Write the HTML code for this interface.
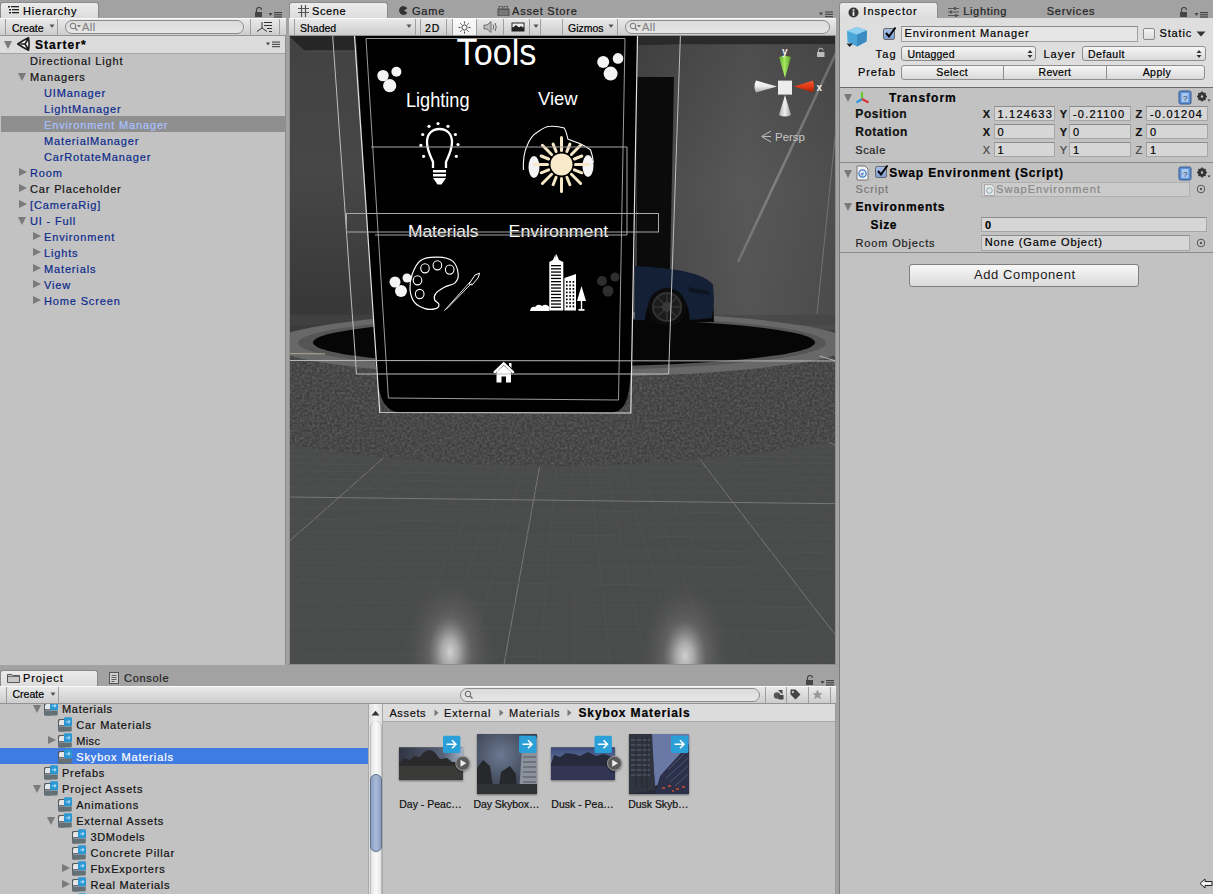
<!DOCTYPE html>
<html><head><meta charset="utf-8">
<style>
*{margin:0;padding:0;box-sizing:border-box}
html,body{width:1213px;height:894px;overflow:hidden;background:#a2a2a2;font-family:"Liberation Sans",sans-serif;font-size:11px;color:#000}
.a{position:absolute}
.t{position:absolute;white-space:nowrap;letter-spacing:0.75px;line-height:16px;-webkit-text-stroke:0.2px currentColor}
.tab{position:absolute;top:2px;height:16px;border:1px solid #8a8a8a;border-bottom:none;border-radius:3px 3px 0 0;background:linear-gradient(#ececec,#dcdcdc)}
.tbar{position:absolute;height:18px;background:linear-gradient(#e9e9e9,#cdcdcd);border-top:1px solid #fafafa;border-bottom:1px solid #939393}
.panel{position:absolute;background:#c2c2c2}
.row{position:absolute;height:16px;left:0;right:0}
.tri-d{position:absolute;width:0;height:0;border-left:4.5px solid transparent;border-right:4.5px solid transparent;border-top:8px solid #7a7a7a}
.tri-r{position:absolute;width:0;height:0;border-top:4.5px solid transparent;border-bottom:4.5px solid transparent;border-left:8px solid #7a7a7a}
.blue{color:#1a318c}
.search{position:absolute;height:14px;border:1px solid #8c8c8c;border-radius:7px;background:linear-gradient(#dcdcdc,#e6e6e6)}
.sep{position:absolute;width:1px;background:#9f9f9f}
</style></head><body>

<!-- ============ HIERARCHY ============ -->
<div class="tab" style="left:0;width:99px"></div>
<svg class="a" style="left:8px;top:6px" width="12" height="8" viewBox="0 0 12 8"><rect x="0" y="0" width="2" height="1.5" fill="#222"/><rect x="3" y="0" width="8" height="1.3" fill="#222"/><rect x="1" y="3" width="2" height="1.5" fill="#222"/><rect x="4" y="3" width="7" height="1.3" fill="#222"/><rect x="1" y="6" width="2" height="1.5" fill="#222"/><rect x="4" y="6" width="7" height="1.3" fill="#222"/></svg>
<div class="t" style="left:23px;top:3px;font-size:11px;letter-spacing:0.8px">Hierarchy</div>
<svg class="a" style="left:254px;top:7px" width="30" height="11" viewBox="0 0 30 11"><path d="M2.5 5 V3 a2.5 2.5 0 0 1 5 0" stroke="#444" stroke-width="1.2" fill="none"/><rect x="1" y="5" width="7" height="5" fill="#444"/><path d="M14.5 6 h4 l-2 3z" fill="#444"/><rect x="20" y="5" width="8" height="1.2" fill="#444"/><rect x="20" y="7.2" width="8" height="1.2" fill="#444"/><rect x="20" y="9.4" width="8" height="1.2" fill="#444"/></svg>
<div class="tbar" style="left:0;top:18px;width:286px"></div>
<div class="sep" style="left:5px;top:19px;height:16px"></div>
<div class="t" style="left:12px;top:19.5px;font-size:10.5px;letter-spacing:0px">Create</div>
<svg class="a" style="left:49px;top:24px" width="6" height="5"><path d="M0.5 0.5h5l-2.5 3.5z" fill="#555"/></svg>
<div class="sep" style="left:57px;top:19px;height:16px"></div>
<div class="search" style="left:65px;top:20px;width:179px"></div>
<svg class="a" style="left:69px;top:22px" width="14" height="10" viewBox="0 0 14 10"><circle cx="4" cy="4" r="2.8" stroke="#777" stroke-width="1" fill="none"/><path d="M6 6 L8.5 8.5" stroke="#777" stroke-width="1.2"/><path d="M8 3h4l-2 2.5z" fill="#777"/></svg>
<div class="t" style="left:82px;top:19px;font-size:11px;color:#888;letter-spacing:0.5px">All</div>
<div class="sep" style="left:250px;top:19px;height:16px"></div>
<svg class="a" style="left:256px;top:21px" width="18" height="12" viewBox="0 0 18 12"><path d="M6 1v6 M6 7 L1 10.5 M6 7 L11 10.5" stroke="#333" stroke-width="1" fill="none"/><rect x="8" y="1" width="8" height="1" fill="#333"/><rect x="8" y="4" width="8" height="1" fill="#333"/><rect x="11" y="7" width="5" height="1" fill="#333"/><rect x="13" y="10" width="3" height="1" fill="#333"/></svg>
<div class="sep" style="left:279px;top:19px;height:16px"></div>
<div class="panel" style="left:0;top:36px;width:286px;height:629px;border-right:1px solid #8c8c8c"></div>
<div class="a" style="left:0;top:36px;width:285px;height:18px;background:#dcdcdc;border-bottom:1px solid #a5a5a5"></div>
<div class="tri-d" style="left:4px;top:41px"></div>
<svg class="a" style="left:17px;top:37px" width="14" height="14" viewBox="0 0 14 14"><path d="M0.8 7 Q6 3.5 11.5 0.8 Q12.6 7 11.5 13.2 Q6 10.5 0.8 7Z" fill="#fff" stroke="#1a1a1a" stroke-width="1.6" stroke-linejoin="round"/><path d="M3.5 7 H8 L11.2 1.8 M8 7 L11.2 12.2" stroke="#1a1a1a" stroke-width="1.7" fill="none"/></svg>
<div class="t" style="left:35px;top:37px;font-size:12px;font-weight:bold;letter-spacing:1.05px">Starter*</div>
<svg class="a" style="left:266px;top:41px" width="16" height="7" viewBox="0 0 16 7"><path d="M0 1.5h4l-2 3z" fill="#444"/><rect x="6" y="0.5" width="8" height="1.1" fill="#444"/><rect x="6" y="2.8" width="8" height="1.1" fill="#444"/><rect x="6" y="5.1" width="8" height="1.1" fill="#444"/></svg>
<div class="t" style="left:30px;top:53px;color:#111;letter-spacing:0.85px">Directional Light</div>
<div class="tri-d" style="left:18px;top:73px"></div>
<div class="t" style="left:30px;top:69px;color:#111;letter-spacing:0.85px">Managers</div>
<div class="t" style="left:44px;top:85px;color:#0c2a8c;letter-spacing:0.85px">UIManager</div>
<div class="t" style="left:44px;top:101px;color:#0c2a8c;letter-spacing:0.85px">LightManager</div>
<div class="a" style="left:1px;top:116px;width:284px;height:16px;background:#8f8f8f"></div>
<div class="t" style="left:44px;top:117px;color:#a9c0ff;letter-spacing:0.85px">Environment Manager</div>
<div class="t" style="left:44px;top:133px;color:#0c2a8c;letter-spacing:0.85px">MaterialManager</div>
<div class="t" style="left:44px;top:149px;color:#0c2a8c;letter-spacing:0.85px">CarRotateManager</div>
<div class="tri-r" style="left:19px;top:168px"></div>
<div class="t" style="left:30px;top:165px;color:#0c2a8c;letter-spacing:0.85px">Room</div>
<div class="tri-r" style="left:19px;top:184px"></div>
<div class="t" style="left:30px;top:181px;color:#111;letter-spacing:0.85px">Car Placeholder</div>
<div class="tri-r" style="left:19px;top:200px"></div>
<div class="t" style="left:30px;top:197px;color:#0c2a8c;letter-spacing:0.85px">[CameraRig]</div>
<div class="tri-d" style="left:18px;top:217px"></div>
<div class="t" style="left:30px;top:213px;color:#0c2a8c;letter-spacing:0.85px">UI - Full</div>
<div class="tri-r" style="left:33px;top:232px"></div>
<div class="t" style="left:44px;top:229px;color:#0c2a8c;letter-spacing:0.85px">Environment</div>
<div class="tri-r" style="left:33px;top:248px"></div>
<div class="t" style="left:44px;top:245px;color:#0c2a8c;letter-spacing:0.85px">Lights</div>
<div class="tri-r" style="left:33px;top:264px"></div>
<div class="t" style="left:44px;top:261px;color:#0c2a8c;letter-spacing:0.85px">Materials</div>
<div class="tri-r" style="left:33px;top:280px"></div>
<div class="t" style="left:44px;top:277px;color:#0c2a8c;letter-spacing:0.85px">View</div>
<div class="tri-r" style="left:33px;top:296px"></div>
<div class="t" style="left:44px;top:293px;color:#0c2a8c;letter-spacing:0.85px">Home Screen</div>

<!-- ============ SCENE ============ -->
<div class="tab" style="left:289px;width:99px"></div>
<svg class="a" style="left:298px;top:5px" width="12" height="12" viewBox="0 0 12 12"><path d="M3.5 0v12M7.5 0v12M0 3.5h11M0 7.5h11" stroke="#555" stroke-width="1.2"/></svg>
<div class="t" style="left:312px;top:3px;letter-spacing:0.6px">Scene</div>
<svg class="a" style="left:399px;top:6px" width="9" height="9" viewBox="0 0 9 9"><path d="M4.5 0.3 A4.2 4.2 0 1 0 8.7 4.5 L5.5 4.5 A1 1 0 0 1 5.5 3 Z" fill="#333"/><circle cx="4.5" cy="4.5" r="4.2" fill="#333"/><path d="M5 4.5 L9 2 L9 7Z" fill="#a2a2a2"/></svg>
<div class="t" style="left:412px;top:3px;letter-spacing:0.8px;color:#222">Game</div>
<svg class="a" style="left:497px;top:5px" width="13" height="11" viewBox="0 0 13 11"><rect x="1" y="4" width="11" height="7" fill="#777" stroke="#444" stroke-width="0.8"/><rect x="2" y="1.5" width="3.5" height="3" fill="none" stroke="#555" stroke-width="0.8"/><rect x="7" y="1.5" width="3.5" height="3" fill="none" stroke="#555" stroke-width="0.8"/></svg>
<div class="t" style="left:512px;top:3px;letter-spacing:0.8px;color:#222">Asset Store</div>
<svg class="a" style="left:819px;top:11px" width="16" height="7" viewBox="0 0 16 7"><path d="M0 1.5h4l-2 3z" fill="#444"/><rect x="6" y="0.5" width="8" height="1.1" fill="#444"/><rect x="6" y="2.8" width="8" height="1.1" fill="#444"/><rect x="6" y="5.1" width="8" height="1.1" fill="#444"/></svg>
<div class="tbar" style="left:289px;top:18px;width:547px"></div>
<div class="sep" style="left:294px;top:19px;height:16px"></div>
<div class="t" style="left:300px;top:19.5px;font-size:10.5px;letter-spacing:0px">Shaded</div>
<svg class="a" style="left:406px;top:24px" width="6" height="5"><path d="M0.5 0.5h5l-2.5 3.5z" fill="#555"/></svg>
<div class="sep" style="left:415px;top:19px;height:16px"></div>
<div class="sep" style="left:420px;top:19px;height:16px"></div>
<div class="t" style="left:425px;top:19.5px;font-size:10.5px;letter-spacing:1px">2D</div>
<div class="sep" style="left:446px;top:19px;height:16px"></div>
<div class="a" style="left:452px;top:19px;width:25px;height:16px;background:linear-gradient(#fafafa,#f0f0f0);border-left:1px solid #9f9f9f;border-right:1px solid #9f9f9f"></div>
<svg class="a" style="left:458px;top:21px" width="13" height="13" viewBox="0 0 13 13"><circle cx="6.5" cy="6.5" r="2.6" fill="none" stroke="#444" stroke-width="1"/><path d="M6.5 0.5v2M6.5 10.5v2M0.5 6.5h2M10.5 6.5h2M2.3 2.3l1.4 1.4M9.3 9.3l1.4 1.4M2.3 10.7l1.4-1.4M9.3 3.7l1.4-1.4" stroke="#444" stroke-width="1"/></svg>
<svg class="a" style="left:483px;top:20px" width="15" height="14" viewBox="0 0 15 14"><path d="M1 5h3l4-3.5v11L4 9H1z" fill="#bbb" stroke="#666" stroke-width="0.9"/><path d="M10 4.5q1.5 2.5 0 5M12 3q2.5 4 0 8" stroke="#666" stroke-width="1" fill="none"/></svg>
<div class="sep" style="left:503px;top:19px;height:16px"></div>
<svg class="a" style="left:511px;top:22px" width="14" height="10" viewBox="0 0 14 10"><rect x="0.5" y="0.5" width="13" height="9" fill="#222"/><rect x="1.5" y="1.5" width="11" height="4" fill="#eee"/><path d="M1.5 6 L5 3 L8 5.5 L10 4 L12.5 6z" fill="#222"/></svg>
<div class="sep" style="left:529px;top:19px;height:16px"></div>
<svg class="a" style="left:533px;top:24px" width="6" height="5"><path d="M0.5 0.5h5l-2.5 3.5z" fill="#555"/></svg>
<div class="sep" style="left:540px;top:19px;height:16px"></div>
<div class="sep" style="left:562px;top:19px;height:16px"></div>
<div class="t" style="left:568px;top:19.5px;font-size:10.5px;letter-spacing:0px">Gizmos</div>
<svg class="a" style="left:608px;top:24px" width="6" height="5"><path d="M0.5 0.5h5l-2.5 3.5z" fill="#555"/></svg>
<div class="sep" style="left:617px;top:19px;height:16px"></div>
<div class="search" style="left:625px;top:20px;width:205px"></div>
<svg class="a" style="left:629px;top:22px" width="14" height="10" viewBox="0 0 14 10"><circle cx="4" cy="4" r="2.8" stroke="#777" stroke-width="1" fill="none"/><path d="M6 6 L8.5 8.5" stroke="#777" stroke-width="1.2"/><path d="M8 3h4l-2 2.5z" fill="#777"/></svg>
<div class="t" style="left:642px;top:19px;font-size:11px;color:#888;letter-spacing:0.5px">All</div>
<svg class="a" style="left:289px;top:36px" width="547" height="629" viewBox="289 36 547 629" font-family="Liberation Sans">
<!--SCENE1-->
<rect x="289" y="36" width="547" height="629" fill="#404040"/>
<defs><linearGradient id="lw" x1="0" y1="0" x2="0" y2="1"><stop offset="0" stop-color="#424242"/><stop offset="0.45" stop-color="#474747"/><stop offset="0.9" stop-color="#383838"/><stop offset="1" stop-color="#3c3c3c"/></linearGradient><linearGradient id="rw" x1="0" y1="0" x2="1" y2="0"><stop offset="0" stop-color="#484848"/><stop offset="0.55" stop-color="#585858"/><stop offset="1" stop-color="#4e4e4e"/></linearGradient><linearGradient id="rwv" x1="0" y1="0" x2="0" y2="1"><stop offset="0" stop-color="#000" stop-opacity="0.12"/><stop offset="0.5" stop-color="#000" stop-opacity="0"/><stop offset="1" stop-color="#000" stop-opacity="0.05"/></linearGradient><radialGradient id="spot" cx="0.5" cy="0.5" r="0.5"><stop offset="0" stop-color="#d0d0d0" stop-opacity="1"/><stop offset="0.18" stop-color="#b8b8b8" stop-opacity="0.85"/><stop offset="0.45" stop-color="#7a7a7a" stop-opacity="0.45"/><stop offset="1" stop-color="#4a4a4a" stop-opacity="0"/></radialGradient><filter id="grav" x="0" y="0" width="1" height="1" color-interpolation-filters="sRGB"><feTurbulence type="fractalNoise" baseFrequency="0.4" numOctaves="3" seed="5"/><feColorMatrix type="matrix" values="1.5 0 0 0 -0.45  1.5 0 0 0 -0.45  1.5 0 0 0 -0.45  0 0 0 0 0.14"/><feComposite in2="SourceGraphic" operator="in"/></filter><clipPath id="gclip"><path d="M289 444.5 Q560 490 836 441 L836 665 L289 665Z"/></clipPath></defs>
<rect x="289" y="36" width="350" height="300" fill="url(#lw)"/>
<path d="M289 36 H836 V45 L680 44 L660 45 H305 Z" fill="#2a2a2a"/>
<path d="M289 36 L305 51 L355 51 L355 36Z" fill="#262626"/>
<path d="M305 51 L355 51" stroke="#555" stroke-width="1"/>
<path d="M637 45 L836 44 L836 330 L637 330Z" fill="url(#rw)"/>
<path d="M637 45 L836 44 L836 330 L637 330Z" fill="url(#rwv)"/>
<path d="M637 77 L674 77 L670 270 L637 270Z" fill="#0b0b0b"/>
<defs><linearGradient id="stk" x1="836" y1="53" x2="738" y2="262" gradientUnits="userSpaceOnUse"><stop offset="0" stop-color="#777"/><stop offset="0.6" stop-color="#8a8a8a"/><stop offset="1" stop-color="#9a9a9a" stop-opacity="0.5"/></linearGradient></defs>
<line x1="836" y1="53" x2="738" y2="262" stroke="url(#stk)" stroke-width="2.5" opacity="0.8"/>
<line x1="836.0" y1="128.0" x2="817.0" y2="314.0" stroke="#8a8a8a" stroke-width="1" opacity="0.6" />
<rect x="289" y="315" width="547" height="10" fill="#444" opacity="0.6"/>
<rect x="289" y="430" width="547" height="235" fill="#4a4b4b"/>
<g clip-path="url(#gclip)"><g><line x1="571" y1="292" x2="-914.1" y2="665" stroke="#787878" stroke-width="1"/><line x1="571" y1="292" x2="-878.7" y2="665" stroke="#505151" stroke-width="1"/><line x1="571" y1="292" x2="-843.2" y2="665" stroke="#505151" stroke-width="1"/><line x1="571" y1="292" x2="-807.8" y2="665" stroke="#505151" stroke-width="1"/><line x1="571" y1="292" x2="-772.3" y2="665" stroke="#505151" stroke-width="1"/><line x1="571" y1="292" x2="-736.8" y2="665" stroke="#505151" stroke-width="1"/><line x1="571" y1="292" x2="-701.4" y2="665" stroke="#505151" stroke-width="1"/><line x1="571" y1="292" x2="-666.0" y2="665" stroke="#505151" stroke-width="1"/><line x1="571" y1="292" x2="-630.5" y2="665" stroke="#505151" stroke-width="1"/><line x1="571" y1="292" x2="-595.1" y2="665" stroke="#505151" stroke-width="1"/><line x1="571" y1="292" x2="-559.6" y2="665" stroke="#787878" stroke-width="1"/><line x1="571" y1="292" x2="-524.2" y2="665" stroke="#505151" stroke-width="1"/><line x1="571" y1="292" x2="-488.7" y2="665" stroke="#505151" stroke-width="1"/><line x1="571" y1="292" x2="-453.2" y2="665" stroke="#505151" stroke-width="1"/><line x1="571" y1="292" x2="-417.8" y2="665" stroke="#505151" stroke-width="1"/><line x1="571" y1="292" x2="-382.4" y2="665" stroke="#505151" stroke-width="1"/><line x1="571" y1="292" x2="-346.9" y2="665" stroke="#505151" stroke-width="1"/><line x1="571" y1="292" x2="-311.5" y2="665" stroke="#505151" stroke-width="1"/><line x1="571" y1="292" x2="-276.0" y2="665" stroke="#505151" stroke-width="1"/><line x1="571" y1="292" x2="-240.6" y2="665" stroke="#505151" stroke-width="1"/><line x1="571" y1="292" x2="-205.1" y2="665" stroke="#787878" stroke-width="1"/><line x1="571" y1="292" x2="-169.7" y2="665" stroke="#505151" stroke-width="1"/><line x1="571" y1="292" x2="-134.2" y2="665" stroke="#505151" stroke-width="1"/><line x1="571" y1="292" x2="-98.8" y2="665" stroke="#505151" stroke-width="1"/><line x1="571" y1="292" x2="-63.3" y2="665" stroke="#505151" stroke-width="1"/><line x1="571" y1="292" x2="-27.9" y2="665" stroke="#505151" stroke-width="1"/><line x1="571" y1="292" x2="7.6" y2="665" stroke="#505151" stroke-width="1"/><line x1="571" y1="292" x2="43.0" y2="665" stroke="#505151" stroke-width="1"/><line x1="571" y1="292" x2="78.5" y2="665" stroke="#505151" stroke-width="1"/><line x1="571" y1="292" x2="113.9" y2="665" stroke="#505151" stroke-width="1"/><line x1="571" y1="292" x2="149.4" y2="665" stroke="#787878" stroke-width="1"/><line x1="571" y1="292" x2="184.8" y2="665" stroke="#505151" stroke-width="1"/><line x1="571" y1="292" x2="220.3" y2="665" stroke="#505151" stroke-width="1"/><line x1="571" y1="292" x2="255.7" y2="665" stroke="#505151" stroke-width="1"/><line x1="571" y1="292" x2="291.2" y2="665" stroke="#505151" stroke-width="1"/><line x1="571" y1="292" x2="326.6" y2="665" stroke="#505151" stroke-width="1"/><line x1="571" y1="292" x2="362.1" y2="665" stroke="#505151" stroke-width="1"/><line x1="571" y1="292" x2="397.5" y2="665" stroke="#505151" stroke-width="1"/><line x1="571" y1="292" x2="433.0" y2="665" stroke="#505151" stroke-width="1"/><line x1="571" y1="292" x2="468.4" y2="665" stroke="#505151" stroke-width="1"/><line x1="571" y1="292" x2="503.9" y2="665" stroke="#787878" stroke-width="1"/><line x1="571" y1="292" x2="539.4" y2="665" stroke="#505151" stroke-width="1"/><line x1="571" y1="292" x2="574.8" y2="665" stroke="#505151" stroke-width="1"/><line x1="571" y1="292" x2="610.2" y2="665" stroke="#505151" stroke-width="1"/><line x1="571" y1="292" x2="645.7" y2="665" stroke="#505151" stroke-width="1"/><line x1="571" y1="292" x2="681.1" y2="665" stroke="#505151" stroke-width="1"/><line x1="571" y1="292" x2="716.6" y2="665" stroke="#505151" stroke-width="1"/><line x1="571" y1="292" x2="752.0" y2="665" stroke="#505151" stroke-width="1"/><line x1="571" y1="292" x2="787.5" y2="665" stroke="#505151" stroke-width="1"/><line x1="571" y1="292" x2="823.0" y2="665" stroke="#505151" stroke-width="1"/><line x1="571" y1="292" x2="858.4" y2="665" stroke="#787878" stroke-width="1"/><line x1="571" y1="292" x2="893.9" y2="665" stroke="#505151" stroke-width="1"/><line x1="571" y1="292" x2="929.3" y2="665" stroke="#505151" stroke-width="1"/><line x1="571" y1="292" x2="964.8" y2="665" stroke="#505151" stroke-width="1"/><line x1="571" y1="292" x2="1000.2" y2="665" stroke="#505151" stroke-width="1"/><line x1="571" y1="292" x2="1035.7" y2="665" stroke="#505151" stroke-width="1"/><line x1="571" y1="292" x2="1071.1" y2="665" stroke="#505151" stroke-width="1"/><line x1="571" y1="292" x2="1106.6" y2="665" stroke="#505151" stroke-width="1"/><line x1="571" y1="292" x2="1142.0" y2="665" stroke="#505151" stroke-width="1"/><line x1="571" y1="292" x2="1177.5" y2="665" stroke="#505151" stroke-width="1"/><line x1="571" y1="292" x2="1212.9" y2="665" stroke="#787878" stroke-width="1"/><line x1="571" y1="292" x2="1248.3" y2="665" stroke="#505151" stroke-width="1"/><line x1="571" y1="292" x2="1283.8" y2="665" stroke="#505151" stroke-width="1"/><line x1="571" y1="292" x2="1319.2" y2="665" stroke="#505151" stroke-width="1"/><line x1="571" y1="292" x2="1354.7" y2="665" stroke="#505151" stroke-width="1"/><line x1="571" y1="292" x2="1390.2" y2="665" stroke="#505151" stroke-width="1"/><line x1="571" y1="292" x2="1425.6" y2="665" stroke="#505151" stroke-width="1"/><line x1="571" y1="292" x2="1461.1" y2="665" stroke="#505151" stroke-width="1"/><line x1="571" y1="292" x2="1496.5" y2="665" stroke="#505151" stroke-width="1"/><line x1="571" y1="292" x2="1532.0" y2="665" stroke="#505151" stroke-width="1"/><line x1="571" y1="292" x2="1567.4" y2="665" stroke="#787878" stroke-width="1"/><line x1="571" y1="292" x2="1602.8" y2="665" stroke="#505151" stroke-width="1"/><line x1="571" y1="292" x2="1638.3" y2="665" stroke="#505151" stroke-width="1"/><line x1="571" y1="292" x2="1673.8" y2="665" stroke="#505151" stroke-width="1"/><line x1="571" y1="292" x2="1709.2" y2="665" stroke="#505151" stroke-width="1"/><line x1="571" y1="292" x2="1744.7" y2="665" stroke="#505151" stroke-width="1"/><line x1="571" y1="292" x2="1780.1" y2="665" stroke="#505151" stroke-width="1"/><line x1="571" y1="292" x2="1815.6" y2="665" stroke="#505151" stroke-width="1"/><line x1="571" y1="292" x2="1851.0" y2="665" stroke="#505151" stroke-width="1"/><line x1="571" y1="292" x2="1886.5" y2="665" stroke="#505151" stroke-width="1"/><line x1="571" y1="292" x2="1921.9" y2="665" stroke="#787878" stroke-width="1"/><line x1="289" y1="421.2" x2="836" y2="427.9" stroke="#505151" stroke-width="1"/><line x1="289" y1="425.3" x2="836" y2="432.0" stroke="#505151" stroke-width="1"/><line x1="289" y1="429.7" x2="836" y2="436.4" stroke="#787878" stroke-width="1"/><line x1="289" y1="434.4" x2="836" y2="441.1" stroke="#505151" stroke-width="1"/><line x1="289" y1="439.5" x2="836" y2="446.2" stroke="#505151" stroke-width="1"/><line x1="289" y1="444.9" x2="836" y2="451.6" stroke="#505151" stroke-width="1"/><line x1="289" y1="450.6" x2="836" y2="457.3" stroke="#505151" stroke-width="1"/><line x1="289" y1="456.9" x2="836" y2="463.6" stroke="#505151" stroke-width="1"/><line x1="289" y1="463.6" x2="836" y2="470.3" stroke="#505151" stroke-width="1"/><line x1="289" y1="470.9" x2="836" y2="477.6" stroke="#505151" stroke-width="1"/><line x1="289" y1="478.9" x2="836" y2="485.6" stroke="#505151" stroke-width="1"/><line x1="289" y1="487.5" x2="836" y2="494.2" stroke="#505151" stroke-width="1"/><line x1="289" y1="497.0" x2="836" y2="503.7" stroke="#787878" stroke-width="1"/><line x1="289" y1="507.4" x2="836" y2="514.1" stroke="#505151" stroke-width="1"/><line x1="289" y1="519.0" x2="836" y2="525.7" stroke="#505151" stroke-width="1"/><line x1="289" y1="531.8" x2="836" y2="538.5" stroke="#505151" stroke-width="1"/><line x1="289" y1="546.1" x2="836" y2="552.8" stroke="#505151" stroke-width="1"/><line x1="289" y1="562.2" x2="836" y2="568.9" stroke="#505151" stroke-width="1"/><line x1="289" y1="580.5" x2="836" y2="587.2" stroke="#505151" stroke-width="1"/><line x1="289" y1="601.4" x2="836" y2="608.1" stroke="#505151" stroke-width="1"/><line x1="289" y1="625.5" x2="836" y2="632.2" stroke="#505151" stroke-width="1"/><line x1="289" y1="653.7" x2="836" y2="660.4" stroke="#505151" stroke-width="1"/></g><ellipse cx="450" cy="652" rx="48" ry="78" fill="url(#spot)"/><ellipse cx="685" cy="656" rx="48" ry="78" fill="url(#spot)"/></g>
<path d="M289 350 L836 350 L836 441 Q560 490 289 444.5 Z" fill="#494949"/>
<path d="M289 350 L836 350 L836 441 Q560 490 289 444.5 Z" fill="#000" filter="url(#grav)"/>
<ellipse cx="562" cy="344" rx="290" ry="33" fill="#686868"/>
<ellipse cx="562" cy="343" rx="264" ry="27" fill="#555555"/>
<ellipse cx="564" cy="342.5" rx="251" ry="24" fill="#060606"/>
<path d="M635 295 H713 L714 322 H635Z" fill="#070707"/>
<path d="M635 266 Q680 268 700 276 Q710 280 713 285 L714 300 L712 318 L690 320 Q688 292 667 288 Q648 290 645 320 L635 320Z" fill="#142036"/>
<path d="M688 287 L708 291 L709 295 L690 292Z" fill="#0e1420"/>
<circle cx="667" cy="307" r="19" fill="#0c0c0c"/>
<circle cx="667" cy="307" r="14" fill="#1c1c1c" stroke="#333" stroke-width="2"/>
<path d="M667 293v28M653 307h28M657 297l20 20M677 297l-20 20" stroke="#323232" stroke-width="1.5"/>
<circle cx="667" cy="307" r="5" fill="#383838"/>

<!--/SCENE1-->
<!--SCENE2-->
<path d="M356 36 L637.5 36 L636.3 200 L632 340 C631 395 628 411 612 412.5 L400 412.5 C382 411 376 395 374.7 340 L366 200 Z" fill="#000"/>
<circle cx="602" cy="281" r="5" fill="#2e2e2e"/>
<circle cx="615" cy="277" r="4.5" fill="#2e2e2e"/>
<circle cx="608" cy="291" r="5.5" fill="#2e2e2e"/>
<circle cx="383" cy="75.6" r="5.7" fill="#f4f4f4"/>
<circle cx="396.4" cy="71.8" r="5" fill="#f4f4f4"/>
<circle cx="389.7" cy="85.7" r="6.6" fill="#f4f4f4"/>
<circle cx="603.2" cy="62" r="6" fill="#f4f4f4"/>
<circle cx="618" cy="58.4" r="5.3" fill="#f4f4f4"/>
<circle cx="610.6" cy="73.6" r="7" fill="#f4f4f4"/>
<circle cx="395" cy="282" r="5.5" fill="#f4f4f4"/>
<circle cx="407" cy="278" r="4.5" fill="#f4f4f4"/>
<circle cx="401" cy="291" r="6" fill="#f4f4f4"/>
<text x="456.5" y="64.5" font-size="37" textLength="80" lengthAdjust="spacingAndGlyphs" fill="#fff">Tools</text>
<text x="405.9" y="107" font-size="19.5" textLength="63.7" lengthAdjust="spacingAndGlyphs" fill="#fff">Lighting</text>
<text x="538" y="104.9" font-size="19" textLength="39.7" lengthAdjust="spacingAndGlyphs" fill="#fff">View</text>
<text x="407.9" y="237.4" font-size="17" textLength="70.7" lengthAdjust="spacingAndGlyphs" fill="#fff">Materials</text>
<text x="508.6" y="237.4" font-size="17" textLength="99.7" lengthAdjust="spacingAndGlyphs" fill="#fff">Environment</text>
<path d="M433 168 L433 162 C430 155 427 150 427 142 C427 134 432 129 439.5 129 C447 129 452 134 452 142 C452 150 449 155 446 162 L446 168" fill="none" stroke="#fff" stroke-width="2.3"/>
<rect x="433" y="170" width="13" height="2.5" fill="#fff"/><rect x="433" y="174" width="13" height="2.5" fill="#fff"/><path d="M433 178 H446 L441.5 184.5 H437.5Z" fill="#fff"/>
<circle cx="438" cy="123.6" r="1.6" fill="#fff"/>
<circle cx="429" cy="126.3" r="1.6" fill="#fff"/>
<circle cx="448" cy="126.3" r="1.6" fill="#fff"/>
<circle cx="422.7" cy="134.5" r="1.6" fill="#fff"/>
<circle cx="455.4" cy="134.5" r="1.6" fill="#fff"/>
<circle cx="420.9" cy="145.4" r="1.6" fill="#fff"/>
<circle cx="458" cy="144.5" r="1.6" fill="#fff"/>
<circle cx="423.6" cy="156.3" r="1.6" fill="#fff"/>
<circle cx="456.3" cy="156.3" r="1.6" fill="#fff"/>
<ellipse cx="534" cy="167" rx="5.5" ry="11" fill="#f4f4f4"/><ellipse cx="588" cy="166" rx="5.5" ry="11" fill="#f4f4f4"/>
<path d="M523.4 170 C523 158 525 150 527 146 C530 138 534 134 538 131.8 C543 128 547 126.3 550.6 126.3 C556 126 561 127 564.2 128 C566 131 567 135 567.9 139 C572 141 576 142 579.7 143.6 C585 146 588 148 590.6 150 C592 154 593 158 593.3 162.6" fill="none" stroke="#fff" stroke-width="1.1"/>
<path d="M575.5 164.4L588.5 164.4M574.4 169.8L581.8 172.8M571.4 174.3L580.6 183.5M566.9 177.3L569.9 184.7M561.5 178.4L561.5 191.4M556.1 177.3L553.1 184.7M551.6 174.3L542.4 183.5M548.6 169.8L541.2 172.8M547.5 164.4L534.5 164.4M548.6 159.0L541.2 156.0M551.6 154.5L542.4 145.3M556.1 151.5L553.1 144.1M561.5 150.4L561.5 137.4M566.9 151.5L569.9 144.1M571.4 154.5L580.6 145.3M574.4 159.0L581.8 156.0" stroke="#f6e7c6" stroke-width="3" stroke-linecap="round"/>
<circle cx="561.5" cy="164.4" r="11" fill="#f8e9cb"/>
<path d="M412.2 274.3 C413.9 269.5 416.4 263.2 420.7 260.4 C425.0 257.5 432.5 257.0 437.9 257.2 C443.2 257.3 449.5 258.6 452.9 261.4 C456.3 264.3 457.9 270.7 458.2 274.3 C458.6 277.9 457.3 280.7 455.0 282.9 C452.7 285.0 447.5 285.4 444.3 287.2 C441.1 289.0 437.3 291.5 435.7 293.6 C434.1 295.7 434.1 298.2 434.7 300.0 C435.2 301.8 438.8 302.9 438.9 304.3 C439.1 305.7 438.1 307.9 435.7 308.6 C433.4 309.3 428.6 309.7 425.0 308.6 C421.4 307.5 416.8 305.4 414.3 302.2 C411.8 299.0 410.4 294.0 410.0 289.3 C409.7 284.7 410.4 279.1 412.2 274.3Z" fill="none" stroke="#fff" stroke-width="1.2"/>
<ellipse cx="425.0" cy="268.3" rx="4.3" ry="4.6" fill="none" stroke="#fff" stroke-width="1.1"/>
<ellipse cx="437.4" cy="265.3" rx="4.3" ry="4.6" fill="none" stroke="#fff" stroke-width="1.1"/>
<ellipse cx="449.7" cy="269.6" rx="4.3" ry="4.6" fill="none" stroke="#fff" stroke-width="1.1"/>
<ellipse cx="417.5" cy="280.3" rx="4.3" ry="4.6" fill="none" stroke="#fff" stroke-width="1.1"/>
<ellipse cx="419.7" cy="294.0" rx="4.3" ry="4.6" fill="none" stroke="#fff" stroke-width="1.1"/>
<path d="M444.3 310.7 L470 282 M446 309.5 L471.5 283.5" stroke="#fff" stroke-width="0.9"/><path d="M469 284 L475 275 L479.7 273.2 L478 278 L472 285Z" fill="none" stroke="#fff" stroke-width="1"/>
<path d="M549.3 310.5 V262 L553 260 L555.5 254 V258 L556.5 254 L559 260 L563.3 262 V310.5Z" fill="#fff"/>
<rect x="551" y="265.0" width="10" height="1.3" fill="#000"/>
<rect x="551" y="268.2" width="10" height="1.3" fill="#000"/>
<rect x="551" y="271.4" width="10" height="1.3" fill="#000"/>
<rect x="551" y="274.6" width="10" height="1.3" fill="#000"/>
<rect x="551" y="277.8" width="10" height="1.3" fill="#000"/>
<rect x="551" y="281.0" width="10" height="1.3" fill="#000"/>
<rect x="551" y="284.2" width="10" height="1.3" fill="#000"/>
<rect x="551" y="287.4" width="10" height="1.3" fill="#000"/>
<rect x="551" y="290.6" width="10" height="1.3" fill="#000"/>
<rect x="551" y="293.8" width="10" height="1.3" fill="#000"/>
<rect x="551" y="297.0" width="10" height="1.3" fill="#000"/>
<rect x="551" y="300.2" width="10" height="1.3" fill="#000"/>
<rect x="551" y="303.4" width="10" height="1.3" fill="#000"/>
<rect x="551" y="306.6" width="10" height="1.3" fill="#000"/>
<path d="M564.4 310.5 V278 L576 274 V310.5Z" fill="#fff"/>
<rect x="566.0" y="281.0" width="1.6" height="1.8" fill="#000"/>
<rect x="569.3" y="281.0" width="1.6" height="1.8" fill="#000"/>
<rect x="572.6" y="281.0" width="1.6" height="1.8" fill="#000"/>
<rect x="566.0" y="284.5" width="1.6" height="1.8" fill="#000"/>
<rect x="569.3" y="284.5" width="1.6" height="1.8" fill="#000"/>
<rect x="572.6" y="284.5" width="1.6" height="1.8" fill="#000"/>
<rect x="566.0" y="288.0" width="1.6" height="1.8" fill="#000"/>
<rect x="569.3" y="288.0" width="1.6" height="1.8" fill="#000"/>
<rect x="572.6" y="288.0" width="1.6" height="1.8" fill="#000"/>
<rect x="566.0" y="291.5" width="1.6" height="1.8" fill="#000"/>
<rect x="569.3" y="291.5" width="1.6" height="1.8" fill="#000"/>
<rect x="572.6" y="291.5" width="1.6" height="1.8" fill="#000"/>
<rect x="566.0" y="295.0" width="1.6" height="1.8" fill="#000"/>
<rect x="569.3" y="295.0" width="1.6" height="1.8" fill="#000"/>
<rect x="572.6" y="295.0" width="1.6" height="1.8" fill="#000"/>
<rect x="566.0" y="298.5" width="1.6" height="1.8" fill="#000"/>
<rect x="569.3" y="298.5" width="1.6" height="1.8" fill="#000"/>
<rect x="572.6" y="298.5" width="1.6" height="1.8" fill="#000"/>
<rect x="566.0" y="302.0" width="1.6" height="1.8" fill="#000"/>
<rect x="569.3" y="302.0" width="1.6" height="1.8" fill="#000"/>
<rect x="572.6" y="302.0" width="1.6" height="1.8" fill="#000"/>
<rect x="566.0" y="305.5" width="1.6" height="1.8" fill="#000"/>
<rect x="569.3" y="305.5" width="1.6" height="1.8" fill="#000"/>
<rect x="572.6" y="305.5" width="1.6" height="1.8" fill="#000"/>
<path d="M577 301 L581.5 286 L586 301Z M580.8 301 H582.2 V309 H580.8Z M578.5 309 H584.5 V310.8 H578.5Z" fill="#fff"/>
<path d="M530 311 Q531 306 535 307 Q538 303 542 306 Q546 303 549.3 307 V311Z" fill="#fff"/>
<path d="M493 372 L503.7 361.7 L514.6 372 L512.6 373.6 L503.7 365 L495 373.6Z M509 363 H511.5 V368 L509 365.5Z" fill="#fff"/>
<path d="M496.5 372 L503.7 365.5 L511 372 V382.4 H506 V376.5 H501.5 V382.4 H496.5Z" fill="#fff"/>
<path d="M332.7 36 L356.5 374 L668.6 374 L680.4 36" fill="none" stroke="#bdbdbd" stroke-width="1"/>
<path d="M354.5 36 L379.8 412.5 L630.8 413 L637.5 36" fill="none" stroke="#e0e0e0" stroke-width="1.2"/>
<path d="M366 38.5 L388.4 398 L618.5 400 L625 38.5 Z" fill="none" stroke="#9a9a9a" stroke-width="1"/>
<rect x="346.5" y="213.5" width="312" height="18.5" fill="none" stroke="#a8a8a8" stroke-width="1"/>
<path d="M371 147 H627 V235 H375" fill="none" stroke="#a8a8a8" stroke-width="1"/>
<path d="M289 360.5 L836 361" stroke="#b8b8b8" stroke-width="1"/>
<path d="M289 353.6 L325 353.8" stroke="#b0a890" stroke-width="1"/>
<path d="M819.6 356 L836 361" stroke="#b8b8b8" stroke-width="1"/>
<defs><linearGradient id="gg" x1="0" y1="0" x2="1" y2="0"><stop offset="0" stop-color="#5aa828"/><stop offset="0.45" stop-color="#a8e860"/><stop offset="1" stop-color="#5a9a28"/></linearGradient><linearGradient id="gr" x1="0" y1="0" x2="0" y2="1"><stop offset="0" stop-color="#f05a30"/><stop offset="0.5" stop-color="#e03a16"/><stop offset="1" stop-color="#a02008"/></linearGradient><linearGradient id="gw" x1="0" y1="0" x2="0" y2="1"><stop offset="0" stop-color="#ffffff"/><stop offset="0.5" stop-color="#e8e8e8"/><stop offset="1" stop-color="#a8a8a8"/></linearGradient><linearGradient id="gd" x1="0" y1="0" x2="1" y2="0"><stop offset="0" stop-color="#b0b0b0"/><stop offset="0.5" stop-color="#f0f0f0"/><stop offset="1" stop-color="#a0a0a0"/></linearGradient></defs>
<path d="M779 57 Q785 55 791 57 L785 78Z" fill="url(#gg)"/>
<path d="M813 80.5 Q815 86.5 813 92.5 L794 86.5Z" fill="url(#gr)"/>
<path d="M756 80.5 Q753 86.5 756 92.5 L777 86.5Z" fill="url(#gw)"/>
<path d="M779 115 Q785 118 791 115 L785 95Z" fill="url(#gd)"/>
<rect x="778" y="80.6" width="14" height="14" fill="#ececec"/>
<text x="782" y="55" font-size="10" font-weight="bold" fill="#f0f0f0">y</text>
<text x="816.5" y="91" font-size="10" font-weight="bold" fill="#f0f0f0">x</text>
<path d="M818.5 52 V50.5 a2.3 2.3 0 0 1 4.6 0" stroke="#bbb" stroke-width="1" fill="none"/><rect x="817" y="52" width="7.5" height="5" fill="#bbb"/>
<path d="M771 131 L761.5 136.5 L771 142 M771 136.5 H763" stroke="#bdbdbd" stroke-width="1" fill="none"/>
<text x="775" y="141" font-size="11" textLength="30" lengthAdjust="spacingAndGlyphs" fill="#c8c8c8">Persp</text>
<path d="M289.5 36 V664.5 H835.5 V36" fill="none" stroke="#8e8e8e" stroke-width="1"/>

<!--/SCENE2-->
</svg>

<!-- ============ INSPECTOR ============ -->
<!--INSP-->
<div class="tab" style="left:839px;width:99px"></div>
<svg class="a" style="left:848px;top:7px" width="11" height="11" viewBox="0 0 11 11"><circle cx="5.5" cy="5.5" r="5" fill="#333"/><rect x="4.6" y="4.5" width="1.8" height="4.3" fill="#eee"/><rect x="4.6" y="2.2" width="1.8" height="1.6" fill="#eee"/></svg>
<div class="t" style="left:863.3px;top:5.69px;font-size:11px;line-height:11px;color:#000;letter-spacing:1.03px;">Inspector</div>
<svg class="a" style="left:948px;top:7px" width="12" height="10" viewBox="0 0 12 10"><path d="M0 1.5h11M0 5h11M0 8.5h11" stroke="#555" stroke-width="1"/><rect x="6" y="0" width="2" height="3" fill="#555"/><rect x="2" y="3.5" width="2" height="3" fill="#555"/><rect x="7" y="7" width="2" height="3" fill="#555"/></svg>
<div class="t" style="left:963.2px;top:5.69px;font-size:11px;line-height:11px;color:#222;letter-spacing:0.68px;">Lighting</div>
<div class="t" style="left:1046.7px;top:5.69px;font-size:11px;line-height:11px;color:#222;letter-spacing:0.82px;">Services</div>
<svg class="a" style="left:1179px;top:7px" width="30" height="11" viewBox="0 0 30 11"><path d="M2.5 5 V3 a2.5 2.5 0 0 1 5 0" stroke="#444" stroke-width="1.2" fill="none"/><rect x="1" y="5" width="7" height="5" fill="#444"/><path d="M15.5 6 h4 l-2 3z" fill="#444"/><rect x="21" y="5" width="8" height="1.2" fill="#444"/><rect x="21" y="7.2" width="8" height="1.2" fill="#444"/><rect x="21" y="9.4" width="8" height="1.2" fill="#444"/></svg>
<div class="a" style="left:839px;top:18px;width:374px;height:876px;background:#c2c2c2;border-left:1px solid #7a7a7a"></div>
<div class="a" style="left:840px;top:18px;width:373px;height:70px;background:#dedede;border-bottom:1px solid #6a6a6a"></div>
<svg class="a" style="left:845px;top:26px" width="24" height="22" viewBox="0 0 24 22"><path d="M2 5 L12 1 L22 4.5 L21.5 15.5 L12 20.5 L2.5 16Z" fill="#4aa6d8"/><path d="M2 5 L12 1 L22 4.5 L12 8.5Z" fill="#8fd0f0"/><path d="M12 8.5 L22 4.5 L21.5 15.5 L12 20.5Z" fill="#3a8cc0"/><path d="M1.5 17.5 H8 L4.7 21Z" fill="#222"/></svg>
<div class="a" style="left:883px;top:28px;width:12px;height:12px;border:1px solid #6a6a6a;border-radius:2px;background:linear-gradient(#a9bfe6,#7f9ed6)"></div>
<svg class="a" style="left:884px;top:26px" width="13" height="13" viewBox="0 0 13 13"><path d="M2 7 L5 10.5 L11.5 1.5" stroke="#000" stroke-width="2" fill="none"/></svg>
<div class="a" style="left:901px;top:26px;width:237px;height:16px;background:#e6e6e6;border:1px solid #a0a0a0;border-top-color:#8a8a8a"></div>
<div class="t" style="left:904.5px;top:28.29px;font-size:11px;line-height:11px;color:#000;letter-spacing:0.89px;">Environment Manager</div>
<div class="a" style="left:1143px;top:28px;width:12px;height:12px;border:1px solid #8a8a8a;border-radius:2px;background:linear-gradient(#f4f4f4,#dcdcdc)"></div>
<div class="t" style="left:1159.5px;top:28.29px;font-size:11px;line-height:11px;color:#000;letter-spacing:0.84px;">Static</div>
<svg class="a" style="left:1196px;top:31px" width="10" height="6"><path d="M0.5 0.5h9l-4.5 5z" fill="#333"/></svg>
<div class="t" style="left:875.5px;top:48.69px;font-size:11px;line-height:11px;color:#000;letter-spacing:1.22px;">Tag</div>
<div class="a" style="left:901px;top:46px;width:135px;height:15px;border:1px solid #8e8e8e;border-radius:3px;background:linear-gradient(#f6f6f6,#d9d9d9)"></div>
<div class="t" style="left:907.5px;top:48.71px;font-size:10.5px;line-height:10.5px;color:#000;letter-spacing:0.21px;">Untagged</div>
<svg class="a" style="left:1027px;top:49px" width="6" height="10"><path d="M0.5 4h5L3 1zM0.5 6h5L3 9z" fill="#333"/></svg>
<div class="t" style="left:1043.5px;top:48.69px;font-size:11px;line-height:11px;color:#000;letter-spacing:0.99px;">Layer</div>
<div class="a" style="left:1082px;top:46px;width:124px;height:15px;border:1px solid #8e8e8e;border-radius:3px;background:linear-gradient(#f6f6f6,#d9d9d9)"></div>
<div class="t" style="left:1088px;top:48.71px;font-size:10.5px;line-height:10.5px;color:#000;letter-spacing:0.54px;">Default</div>
<svg class="a" style="left:1196px;top:49px" width="6" height="10"><path d="M0.5 4h5L3 1zM0.5 6h5L3 9z" fill="#333"/></svg>
<div class="t" style="left:858px;top:67.29px;font-size:11px;line-height:11px;color:#000;letter-spacing:0.92px;">Prefab</div>
<div class="a" style="left:901px;top:65px;width:304px;height:15px;border:1px solid #8e8e8e;border-radius:3px;background:linear-gradient(#f6f6f6,#d9d9d9)"></div>
<div class="a" style="left:1003px;top:65px;width:1px;height:15px;background:#8e8e8e"></div>
<div class="a" style="left:1106px;top:65px;width:1px;height:15px;background:#8e8e8e"></div>
<div class="t" style="left:936.3px;top:67.41px;font-size:10.5px;line-height:10.5px;color:#000;letter-spacing:0.46px;">Select</div>
<div class="t" style="left:1038.5px;top:67.41px;font-size:10.5px;line-height:10.5px;color:#000;letter-spacing:0.31px;">Revert</div>
<div class="t" style="left:1142.7px;top:67.41px;font-size:10.5px;line-height:10.5px;color:#000;letter-spacing:0.43px;">Apply</div>
<div class="tri-d" style="left:844px;top:94px"></div>
<svg class="a" style="left:855px;top:90px" width="16" height="15" viewBox="0 0 16 15"><path d="M7 2 V9" stroke="#6c3" stroke-width="2.2"/><path d="M7 9 L1.5 12.5" stroke="#39d" stroke-width="2.2"/><path d="M7 9 L13.5 12.5" stroke="#d33" stroke-width="2.2"/></svg>
<div class="t" style="left:889px;top:92.04px;font-size:12px;line-height:12px;font-weight:700;color:#000;letter-spacing:1.01px;">Transform</div>
<svg class="a" style="left:1178px;top:90px" width="34" height="15" viewBox="0 0 34 15"><rect x="1" y="1" width="12" height="13" rx="1.5" fill="#5b8fd6" stroke="#3a5a8a" stroke-width="1"/><rect x="3.5" y="3" width="7" height="9" fill="#a9c8f0"/><text x="5" y="11" font-size="8" fill="#234" font-family="Liberation Sans">?</text><circle cx="24" cy="6.5" r="3.2" fill="none" stroke="#333" stroke-width="2"/><path d="M24 1.5v10M19 6.5h10M20.5 3l7 7M27.5 3l-7 7" stroke="#333" stroke-width="1.5"/><circle cx="24" cy="6.5" r="1.2" fill="#c2c2c2"/><path d="M29.5 9.5h3l-1.5 2z" fill="#333"/></svg>
<div class="t" style="left:855.3px;top:108.34px;font-size:12px;line-height:12px;font-weight:700;color:#111;letter-spacing:0.58px;">Position</div>
<div class="t" style="left:982.7px;top:109.19px;font-size:11px;line-height:11px;font-weight:700;color:#111;letter-spacing:0.00px;">X</div>
<div class="a" style="left:993.5px;top:106px;width:61.5px;height:15px;background:#d6d6d6;border:1px solid #a6a6a6;border-top-color:#8c8c8c"></div>
<div class="a" style="left:994.5px;top:106px;width:59.5px;height:15px;overflow:hidden">
<div class="t" style="left:3px;top:2.99px;font-size:11px;line-height:11px;color:#000;letter-spacing:1.20px;">1.124633</div>
</div>
<div class="t" style="left:1059.7px;top:109.19px;font-size:11px;line-height:11px;font-weight:700;color:#111;letter-spacing:0.00px;">Y</div>
<div class="a" style="left:1069px;top:106px;width:61.5px;height:15px;background:#d6d6d6;border:1px solid #a6a6a6;border-top-color:#8c8c8c"></div>
<div class="a" style="left:1070px;top:106px;width:59.5px;height:15px;overflow:hidden">
<div class="t" style="left:3px;top:2.99px;font-size:11px;line-height:11px;color:#000;letter-spacing:1.20px;">-0.21100</div>
</div>
<div class="t" style="left:1135.5px;top:109.19px;font-size:11px;line-height:11px;font-weight:700;color:#111;letter-spacing:0.00px;">Z</div>
<div class="a" style="left:1146px;top:106px;width:61.5px;height:15px;background:#d6d6d6;border:1px solid #a6a6a6;border-top-color:#8c8c8c"></div>
<div class="a" style="left:1147px;top:106px;width:59.5px;height:15px;overflow:hidden">
<div class="t" style="left:3px;top:2.99px;font-size:11px;line-height:11px;color:#000;letter-spacing:1.20px;">-0.01204</div>
</div>
<div class="t" style="left:855.3px;top:126.24px;font-size:12px;line-height:12px;font-weight:700;color:#111;letter-spacing:0.48px;">Rotation</div>
<div class="t" style="left:982.7px;top:127.09px;font-size:11px;line-height:11px;font-weight:700;color:#111;letter-spacing:0.00px;">X</div>
<div class="a" style="left:993.5px;top:124px;width:61.5px;height:15px;background:#d6d6d6;border:1px solid #a6a6a6;border-top-color:#8c8c8c"></div>
<div class="a" style="left:994.5px;top:124px;width:59.5px;height:15px;overflow:hidden">
<div class="t" style="left:3px;top:2.99px;font-size:11px;line-height:11px;color:#000;letter-spacing:0.00px;">0</div>
</div>
<div class="t" style="left:1059.7px;top:127.09px;font-size:11px;line-height:11px;font-weight:700;color:#111;letter-spacing:0.00px;">Y</div>
<div class="a" style="left:1069px;top:124px;width:61.5px;height:15px;background:#d6d6d6;border:1px solid #a6a6a6;border-top-color:#8c8c8c"></div>
<div class="a" style="left:1070px;top:124px;width:59.5px;height:15px;overflow:hidden">
<div class="t" style="left:3px;top:2.99px;font-size:11px;line-height:11px;color:#000;letter-spacing:0.00px;">0</div>
</div>
<div class="t" style="left:1135.5px;top:127.09px;font-size:11px;line-height:11px;font-weight:700;color:#111;letter-spacing:0.00px;">Z</div>
<div class="a" style="left:1146px;top:124px;width:61.5px;height:15px;background:#d6d6d6;border:1px solid #a6a6a6;border-top-color:#8c8c8c"></div>
<div class="a" style="left:1147px;top:124px;width:59.5px;height:15px;overflow:hidden">
<div class="t" style="left:3px;top:2.99px;font-size:11px;line-height:11px;color:#000;letter-spacing:0.00px;">0</div>
</div>
<div class="t" style="left:855.3px;top:144.89px;font-size:11px;line-height:11px;color:#222;letter-spacing:0.62px;">Scale</div>
<div class="t" style="left:982.7px;top:144.89px;font-size:11px;line-height:11px;color:#444;letter-spacing:0.00px;">X</div>
<div class="a" style="left:993.5px;top:142px;width:61.5px;height:15px;background:#d6d6d6;border:1px solid #a6a6a6;border-top-color:#8c8c8c"></div>
<div class="a" style="left:994.5px;top:142px;width:59.5px;height:15px;overflow:hidden">
<div class="t" style="left:3px;top:2.99px;font-size:11px;line-height:11px;color:#000;letter-spacing:0.00px;">1</div>
</div>
<div class="t" style="left:1059.7px;top:144.89px;font-size:11px;line-height:11px;color:#444;letter-spacing:0.00px;">Y</div>
<div class="a" style="left:1069px;top:142px;width:61.5px;height:15px;background:#d6d6d6;border:1px solid #a6a6a6;border-top-color:#8c8c8c"></div>
<div class="a" style="left:1070px;top:142px;width:59.5px;height:15px;overflow:hidden">
<div class="t" style="left:3px;top:2.99px;font-size:11px;line-height:11px;color:#000;letter-spacing:0.00px;">1</div>
</div>
<div class="t" style="left:1135.5px;top:144.89px;font-size:11px;line-height:11px;color:#444;letter-spacing:0.00px;">Z</div>
<div class="a" style="left:1146px;top:142px;width:61.5px;height:15px;background:#d6d6d6;border:1px solid #a6a6a6;border-top-color:#8c8c8c"></div>
<div class="a" style="left:1147px;top:142px;width:59.5px;height:15px;overflow:hidden">
<div class="t" style="left:3px;top:2.99px;font-size:11px;line-height:11px;color:#000;letter-spacing:0.00px;">1</div>
</div>
<div class="a" style="left:839px;top:162px;width:374px;height:1px;background:#8a8a8a"></div>
<div class="tri-d" style="left:844px;top:170px"></div>
<svg class="a" style="left:856px;top:165px" width="13" height="16" viewBox="0 0 13 16"><path d="M1 1 H9 L12 4 V15 H1Z" fill="#f4f4f4" stroke="#777" stroke-width="1"/><circle cx="6.5" cy="8.5" r="3.6" fill="none" stroke="#3a78c8" stroke-width="1.3"/><text x="4.5" y="11" font-size="6" fill="#3a78c8" font-family="Liberation Sans" font-weight="bold">#</text></svg>
<div class="a" style="left:875px;top:166px;width:12px;height:12px;border:1px solid #6a6a6a;border-radius:2px;background:linear-gradient(#a9bfe6,#7f9ed6)"></div>
<svg class="a" style="left:876px;top:164px" width="13" height="13" viewBox="0 0 13 13"><path d="M2 7 L5 10.5 L11.5 1.5" stroke="#000" stroke-width="2" fill="none"/></svg>
<div class="t" style="left:889.3px;top:166.84px;font-size:12px;line-height:12px;font-weight:700;color:#000;letter-spacing:0.85px;">Swap Environment (Script)</div>
<svg class="a" style="left:1178px;top:166px" width="34" height="15" viewBox="0 0 34 15"><rect x="1" y="1" width="12" height="13" rx="1.5" fill="#5b8fd6" stroke="#3a5a8a" stroke-width="1"/><rect x="3.5" y="3" width="7" height="9" fill="#a9c8f0"/><text x="5" y="11" font-size="8" fill="#234" font-family="Liberation Sans">?</text><circle cx="24" cy="6.5" r="3.2" fill="none" stroke="#333" stroke-width="2"/><path d="M24 1.5v10M19 6.5h10M20.5 3l7 7M27.5 3l-7 7" stroke="#333" stroke-width="1.5"/><circle cx="24" cy="6.5" r="1.2" fill="#c2c2c2"/><path d="M29.5 9.5h3l-1.5 2z" fill="#333"/></svg>
<div class="t" style="left:855.6px;top:184.09px;font-size:11px;line-height:11px;color:#777;letter-spacing:0.85px;">Script</div>
<div class="a" style="left:981px;top:182px;width:209px;height:15px;background:#cbcbcb;border:1px solid #b0b0b0"></div>
<svg class="a" style="left:984px;top:184px" width="11" height="12" viewBox="0 0 11 12"><path d="M0.5 0.5H7.5L10.5 3.5V11.5H0.5Z" fill="#e6e6e6" stroke="#aaa" stroke-width="1"/><circle cx="5.5" cy="6.5" r="2.8" fill="none" stroke="#8ab" stroke-width="1"/></svg>
<div class="t" style="left:996px;top:184.09px;font-size:11px;line-height:11px;color:#888;letter-spacing:1.05px;">SwapEnvironment</div>
<svg class="a" style="left:1196px;top:184px" width="10" height="10" viewBox="0 0 10 10"><circle cx="5" cy="5" r="3.8" fill="none" stroke="#555" stroke-width="1"/><circle cx="5" cy="5" r="1.2" fill="#555"/></svg>
<div class="tri-d" style="left:844px;top:203px"></div>
<div class="t" style="left:855.5px;top:201.24px;font-size:12px;line-height:12px;font-weight:700;color:#000;letter-spacing:0.82px;">Environments</div>
<div class="t" style="left:870.6px;top:219.24px;font-size:12px;line-height:12px;font-weight:700;color:#000;letter-spacing:0.63px;">Size</div>
<div class="a" style="left:981px;top:217px;width:226px;height:15px;background:#d6d6d6;border:1px solid #a6a6a6;border-top-color:#8c8c8c"></div>
<div class="t" style="left:985px;top:219.69px;font-size:11px;line-height:11px;font-weight:700;color:#000;letter-spacing:0.00px;">0</div>
<div class="t" style="left:855.5px;top:237.89px;font-size:11px;line-height:11px;color:#222;letter-spacing:0.85px;">Room Objects</div>
<div class="a" style="left:981px;top:235px;width:209px;height:16px;background:#d6d6d6;border:1px solid #a6a6a6;border-top-color:#8c8c8c"></div>
<div class="t" style="left:984.7px;top:237.49px;font-size:11px;line-height:11px;color:#000;letter-spacing:0.93px;">None (Game Object)</div>
<svg class="a" style="left:1196px;top:238px" width="10" height="10" viewBox="0 0 10 10"><circle cx="5" cy="5" r="3.8" fill="none" stroke="#555" stroke-width="1"/><circle cx="5" cy="5" r="1.2" fill="#555"/></svg>
<div class="a" style="left:839px;top:252px;width:374px;height:1px;background:#8a8a8a"></div>
<div class="a" style="left:909px;top:264px;width:230px;height:23px;border:1px solid #7e7e7e;border-radius:3px;background:linear-gradient(#f8f8f8,#dadada)"></div>
<div class="t" style="left:973.9px;top:268.20px;font-size:13px;line-height:13px;color:#1a1a1a;letter-spacing:0.61px;-webkit-text-stroke:0;">Add Component</div>
<svg class="a" style="left:1199px;top:877px" width="14" height="13" viewBox="0 0 14 13"><path d="M1 6.5 L6 2 V4.5 H13 V8.5 H6 V11Z" fill="#eee" stroke="#222" stroke-width="1"/></svg>

<!--/INSP-->

<!-- ============ PROJECT ============ -->
<!--PROJ-->
<div class="tab" style="left:0;top:670px;width:98px"></div>
<svg class="a" style="left:7px;top:673px" width="13" height="10" viewBox="0 0 13 10"><path d="M0.5 1.5 H5 L6 2.5 H12.5 V9.5 H0.5Z" fill="#c8c8c8" stroke="#555" stroke-width="1"/><path d="M0.5 3.5 H12.5" stroke="#555" stroke-width="0.8"/></svg>
<div class="t" style="left:23px;top:672.99px;font-size:11px;line-height:11px;color:#000;letter-spacing:0.91px;">Project</div>
<svg class="a" style="left:109px;top:672px" width="10" height="12" viewBox="0 0 10 12"><rect x="0.5" y="0.5" width="9" height="11" fill="#d0d0d0" stroke="#555" stroke-width="1"/><path d="M2.5 3.5h5M2.5 5.5h5M2.5 7.5h5M2.5 9.5h3" stroke="#555" stroke-width="0.9"/></svg>
<div class="t" style="left:124px;top:672.99px;font-size:11px;line-height:11px;color:#222;letter-spacing:0.69px;">Console</div>
<svg class="a" style="left:805px;top:675px" width="30" height="11" viewBox="0 0 30 11"><path d="M2.5 5 V3 a2.5 2.5 0 0 1 5 0" stroke="#444" stroke-width="1.2" fill="none"/><rect x="1" y="5" width="7" height="5" fill="#444"/><path d="M15.5 6 h4 l-2 3z" fill="#444"/><rect x="21" y="5" width="8" height="1.2" fill="#444"/><rect x="21" y="7.2" width="8" height="1.2" fill="#444"/><rect x="21" y="9.4" width="8" height="1.2" fill="#444"/></svg>
<div class="tbar" style="left:0;top:686px;width:836px"></div>
<div class="sep" style="left:6px;top:687px;height:16px"></div>
<div class="t" style="left:12.5px;top:689.41px;font-size:10.5px;line-height:10.5px;color:#000;letter-spacing:0.00px;">Create</div>
<svg class="a" style="left:50px;top:692px" width="6" height="5"><path d="M0.5 0.5h5l-2.5 3.5z" fill="#555"/></svg>
<div class="sep" style="left:58px;top:687px;height:16px"></div>
<div class="search" style="left:460px;top:688px;width:300px"></div>
<svg class="a" style="left:464px;top:690px" width="10" height="10" viewBox="0 0 10 10"><circle cx="4" cy="4" r="2.8" stroke="#666" stroke-width="1" fill="none"/><path d="M6 6 L8.5 8.5" stroke="#666" stroke-width="1.2"/></svg>
<div class="sep" style="left:765px;top:687px;height:16px"></div>
<svg class="a" style="left:773px;top:689px" width="11" height="11" viewBox="0 0 11 11"><path d="M5 1 L9.5 1 L9.5 5.5Z" fill="#444"/><circle cx="4" cy="6.5" r="3.2" fill="#555"/><rect x="5.5" y="6" width="5" height="4.5" fill="#444"/></svg>
<div class="sep" style="left:786px;top:687px;height:16px"></div>
<svg class="a" style="left:790px;top:689px" width="11" height="11" viewBox="0 0 11 11"><path d="M0.5 0.5 H5.5 L10.5 5.5 L5.5 10.5 L0.5 5.5Z" fill="#444"/><circle cx="3" cy="3" r="1.1" fill="#ddd"/></svg>
<div class="sep" style="left:808px;top:687px;height:16px"></div>
<svg class="a" style="left:812px;top:689px" width="11" height="11" viewBox="0 0 11 11"><path d="M5.5 0.5 L7 4 L10.5 4.2 L7.8 6.5 L8.8 10.3 L5.5 8.2 L2.2 10.3 L3.2 6.5 L0.5 4.2 L4 4Z" fill="#999"/></svg>
<div class="sep" style="left:830px;top:687px;height:16px"></div>
<div class="a" style="left:0;top:704px;width:836px;height:190px;background:#c2c2c2;overflow:hidden"></div>
<div class="a" style="left:0;top:704px;width:368px;height:190px;overflow:hidden" id="ptree">
<div class="tri-d" style="left:32.5px;top:1px"></div>
<svg class="a" style="left:43px;top:-3.5px" width="16" height="15" viewBox="0 0 16 15"><path d="M1 3.5 Q1 2 2.5 2 H8 V14.5 H2.5 Q1 14.5 1 13Z" fill="#50585e"/><path d="M2 5 Q2 3 3.5 3 H7.5 V8 H2Z" fill="#e6e6e6"/><path d="M2 9.3 H8" stroke="#c8d0d8" stroke-width="1"/><path d="M1 9.5 H14.8 V13 Q14.8 14.5 13.3 14.5 H2.5 Q1 14.5 1 13Z" fill="#657075"/><rect x="7" y="0.3" width="8" height="9" rx="1.2" fill="#2a96d2"/><path d="M11.3 2.5 L13.6 4.8 L11.3 7.1Z" fill="#bfe4f8"/><path d="M8.8 4.8 H12" stroke="#8ccbec" stroke-width="1.3"/></svg>
<div class="t" style="left:62.0px;top:0.29px;font-size:11px;line-height:11px;color:#111;letter-spacing:0.68px;">Materials</div>
<svg class="a" style="left:57px;top:12.5px" width="16" height="15" viewBox="0 0 16 15"><path d="M1 3.5 Q1 2 2.5 2 H8 V14.5 H2.5 Q1 14.5 1 13Z" fill="#50585e"/><path d="M2 5 Q2 3 3.5 3 H7.5 V8 H2Z" fill="#e6e6e6"/><path d="M2 9.3 H8" stroke="#c8d0d8" stroke-width="1"/><path d="M1 9.5 H14.8 V13 Q14.8 14.5 13.3 14.5 H2.5 Q1 14.5 1 13Z" fill="#657075"/><rect x="7" y="0.3" width="8" height="9" rx="1.2" fill="#2a96d2"/><path d="M11.3 2.5 L13.6 4.8 L11.3 7.1Z" fill="#bfe4f8"/><path d="M8.8 4.8 H12" stroke="#8ccbec" stroke-width="1.3"/></svg>
<div class="t" style="left:76.2px;top:16.29px;font-size:11px;line-height:11px;color:#111;letter-spacing:0.79px;">Car Materials</div>
<div class="tri-r" style="left:47.5px;top:31.5px"></div>
<svg class="a" style="left:57px;top:28.5px" width="16" height="15" viewBox="0 0 16 15"><path d="M1 3.5 Q1 2 2.5 2 H8 V14.5 H2.5 Q1 14.5 1 13Z" fill="#50585e"/><path d="M2 5 Q2 3 3.5 3 H7.5 V8 H2Z" fill="#e6e6e6"/><path d="M2 9.3 H8" stroke="#c8d0d8" stroke-width="1"/><path d="M1 9.5 H14.8 V13 Q14.8 14.5 13.3 14.5 H2.5 Q1 14.5 1 13Z" fill="#657075"/><rect x="7" y="0.3" width="8" height="9" rx="1.2" fill="#2a96d2"/><path d="M11.3 2.5 L13.6 4.8 L11.3 7.1Z" fill="#bfe4f8"/><path d="M8.8 4.8 H12" stroke="#8ccbec" stroke-width="1.3"/></svg>
<div class="t" style="left:76.2px;top:32.29px;font-size:11px;line-height:11px;color:#111;letter-spacing:0.40px;">Misc</div>
<div class="a" style="left:0;top:44px;width:368px;height:16px;background:#3e7ce4"></div>
<svg class="a" style="left:57px;top:44.5px" width="16" height="15" viewBox="0 0 16 15"><path d="M1 3.5 Q1 2 2.5 2 H8 V14.5 H2.5 Q1 14.5 1 13Z" fill="#50585e"/><path d="M2 5 Q2 3 3.5 3 H7.5 V8 H2Z" fill="#e6e6e6"/><path d="M2 9.3 H8" stroke="#c8d0d8" stroke-width="1"/><path d="M1 9.5 H14.8 V13 Q14.8 14.5 13.3 14.5 H2.5 Q1 14.5 1 13Z" fill="#657075"/><rect x="7" y="0.3" width="8" height="9" rx="1.2" fill="#2a96d2"/><path d="M11.3 2.5 L13.6 4.8 L11.3 7.1Z" fill="#bfe4f8"/><path d="M8.8 4.8 H12" stroke="#8ccbec" stroke-width="1.3"/></svg>
<div class="t" style="left:76.2px;top:48.29px;font-size:11px;line-height:11px;color:#fff;letter-spacing:0.87px;">Skybox Materials</div>
<svg class="a" style="left:43px;top:60.5px" width="16" height="15" viewBox="0 0 16 15"><path d="M1 3.5 Q1 2 2.5 2 H8 V14.5 H2.5 Q1 14.5 1 13Z" fill="#50585e"/><path d="M2 5 Q2 3 3.5 3 H7.5 V8 H2Z" fill="#e6e6e6"/><path d="M2 9.3 H8" stroke="#c8d0d8" stroke-width="1"/><path d="M1 9.5 H14.8 V13 Q14.8 14.5 13.3 14.5 H2.5 Q1 14.5 1 13Z" fill="#657075"/><rect x="7" y="0.3" width="8" height="9" rx="1.2" fill="#2a96d2"/><path d="M11.3 2.5 L13.6 4.8 L11.3 7.1Z" fill="#bfe4f8"/><path d="M8.8 4.8 H12" stroke="#8ccbec" stroke-width="1.3"/></svg>
<div class="t" style="left:62.0px;top:64.29px;font-size:11px;line-height:11px;color:#111;letter-spacing:0.73px;">Prefabs</div>
<div class="tri-d" style="left:32.5px;top:81px"></div>
<svg class="a" style="left:43px;top:76.5px" width="16" height="15" viewBox="0 0 16 15"><path d="M1 3.5 Q1 2 2.5 2 H8 V14.5 H2.5 Q1 14.5 1 13Z" fill="#50585e"/><path d="M2 5 Q2 3 3.5 3 H7.5 V8 H2Z" fill="#e6e6e6"/><path d="M2 9.3 H8" stroke="#c8d0d8" stroke-width="1"/><path d="M1 9.5 H14.8 V13 Q14.8 14.5 13.3 14.5 H2.5 Q1 14.5 1 13Z" fill="#657075"/><rect x="7" y="0.3" width="8" height="9" rx="1.2" fill="#2a96d2"/><path d="M11.3 2.5 L13.6 4.8 L11.3 7.1Z" fill="#bfe4f8"/><path d="M8.8 4.8 H12" stroke="#8ccbec" stroke-width="1.3"/></svg>
<div class="t" style="left:62.0px;top:80.29px;font-size:11px;line-height:11px;color:#111;letter-spacing:0.83px;">Project Assets</div>
<svg class="a" style="left:57px;top:92.5px" width="16" height="15" viewBox="0 0 16 15"><path d="M1 3.5 Q1 2 2.5 2 H8 V14.5 H2.5 Q1 14.5 1 13Z" fill="#50585e"/><path d="M2 5 Q2 3 3.5 3 H7.5 V8 H2Z" fill="#e6e6e6"/><path d="M2 9.3 H8" stroke="#c8d0d8" stroke-width="1"/><path d="M1 9.5 H14.8 V13 Q14.8 14.5 13.3 14.5 H2.5 Q1 14.5 1 13Z" fill="#657075"/><rect x="7" y="0.3" width="8" height="9" rx="1.2" fill="#2a96d2"/><path d="M11.3 2.5 L13.6 4.8 L11.3 7.1Z" fill="#bfe4f8"/><path d="M8.8 4.8 H12" stroke="#8ccbec" stroke-width="1.3"/></svg>
<div class="t" style="left:76.2px;top:96.29px;font-size:11px;line-height:11px;color:#111;letter-spacing:0.84px;">Animations</div>
<div class="tri-d" style="left:46.5px;top:113px"></div>
<svg class="a" style="left:57px;top:108.5px" width="16" height="15" viewBox="0 0 16 15"><path d="M1 3.5 Q1 2 2.5 2 H8 V14.5 H2.5 Q1 14.5 1 13Z" fill="#50585e"/><path d="M2 5 Q2 3 3.5 3 H7.5 V8 H2Z" fill="#e6e6e6"/><path d="M2 9.3 H8" stroke="#c8d0d8" stroke-width="1"/><path d="M1 9.5 H14.8 V13 Q14.8 14.5 13.3 14.5 H2.5 Q1 14.5 1 13Z" fill="#657075"/><rect x="7" y="0.3" width="8" height="9" rx="1.2" fill="#2a96d2"/><path d="M11.3 2.5 L13.6 4.8 L11.3 7.1Z" fill="#bfe4f8"/><path d="M8.8 4.8 H12" stroke="#8ccbec" stroke-width="1.3"/></svg>
<div class="t" style="left:76.2px;top:112.29px;font-size:11px;line-height:11px;color:#111;letter-spacing:0.81px;">External Assets</div>
<svg class="a" style="left:71px;top:124.5px" width="16" height="15" viewBox="0 0 16 15"><path d="M1 3.5 Q1 2 2.5 2 H8 V14.5 H2.5 Q1 14.5 1 13Z" fill="#50585e"/><path d="M2 5 Q2 3 3.5 3 H7.5 V8 H2Z" fill="#e6e6e6"/><path d="M2 9.3 H8" stroke="#c8d0d8" stroke-width="1"/><path d="M1 9.5 H14.8 V13 Q14.8 14.5 13.3 14.5 H2.5 Q1 14.5 1 13Z" fill="#657075"/><rect x="7" y="0.3" width="8" height="9" rx="1.2" fill="#2a96d2"/><path d="M11.3 2.5 L13.6 4.8 L11.3 7.1Z" fill="#bfe4f8"/><path d="M8.8 4.8 H12" stroke="#8ccbec" stroke-width="1.3"/></svg>
<div class="t" style="left:90.4px;top:128.29px;font-size:11px;line-height:11px;color:#111;letter-spacing:0.67px;">3DModels</div>
<svg class="a" style="left:71px;top:140.5px" width="16" height="15" viewBox="0 0 16 15"><path d="M1 3.5 Q1 2 2.5 2 H8 V14.5 H2.5 Q1 14.5 1 13Z" fill="#50585e"/><path d="M2 5 Q2 3 3.5 3 H7.5 V8 H2Z" fill="#e6e6e6"/><path d="M2 9.3 H8" stroke="#c8d0d8" stroke-width="1"/><path d="M1 9.5 H14.8 V13 Q14.8 14.5 13.3 14.5 H2.5 Q1 14.5 1 13Z" fill="#657075"/><rect x="7" y="0.3" width="8" height="9" rx="1.2" fill="#2a96d2"/><path d="M11.3 2.5 L13.6 4.8 L11.3 7.1Z" fill="#bfe4f8"/><path d="M8.8 4.8 H12" stroke="#8ccbec" stroke-width="1.3"/></svg>
<div class="t" style="left:90.4px;top:144.29px;font-size:11px;line-height:11px;color:#111;letter-spacing:0.83px;">Concrete Pillar</div>
<div class="tri-r" style="left:61.5px;top:159.5px"></div>
<svg class="a" style="left:71px;top:156.5px" width="16" height="15" viewBox="0 0 16 15"><path d="M1 3.5 Q1 2 2.5 2 H8 V14.5 H2.5 Q1 14.5 1 13Z" fill="#50585e"/><path d="M2 5 Q2 3 3.5 3 H7.5 V8 H2Z" fill="#e6e6e6"/><path d="M2 9.3 H8" stroke="#c8d0d8" stroke-width="1"/><path d="M1 9.5 H14.8 V13 Q14.8 14.5 13.3 14.5 H2.5 Q1 14.5 1 13Z" fill="#657075"/><rect x="7" y="0.3" width="8" height="9" rx="1.2" fill="#2a96d2"/><path d="M11.3 2.5 L13.6 4.8 L11.3 7.1Z" fill="#bfe4f8"/><path d="M8.8 4.8 H12" stroke="#8ccbec" stroke-width="1.3"/></svg>
<div class="t" style="left:90.4px;top:160.29px;font-size:11px;line-height:11px;color:#111;letter-spacing:0.81px;">FbxExporters</div>
<div class="tri-r" style="left:61.5px;top:175.5px"></div>
<svg class="a" style="left:71px;top:172.5px" width="16" height="15" viewBox="0 0 16 15"><path d="M1 3.5 Q1 2 2.5 2 H8 V14.5 H2.5 Q1 14.5 1 13Z" fill="#50585e"/><path d="M2 5 Q2 3 3.5 3 H7.5 V8 H2Z" fill="#e6e6e6"/><path d="M2 9.3 H8" stroke="#c8d0d8" stroke-width="1"/><path d="M1 9.5 H14.8 V13 Q14.8 14.5 13.3 14.5 H2.5 Q1 14.5 1 13Z" fill="#657075"/><rect x="7" y="0.3" width="8" height="9" rx="1.2" fill="#2a96d2"/><path d="M11.3 2.5 L13.6 4.8 L11.3 7.1Z" fill="#bfe4f8"/><path d="M8.8 4.8 H12" stroke="#8ccbec" stroke-width="1.3"/></svg>
<div class="t" style="left:90.4px;top:176.29px;font-size:11px;line-height:11px;color:#111;letter-spacing:0.67px;">Real Materials</div>
<svg class="a" style="left:71px;top:188.5px" width="16" height="15" viewBox="0 0 16 15"><path d="M1 3.5 Q1 2 2.5 2 H8 V14.5 H2.5 Q1 14.5 1 13Z" fill="#50585e"/><path d="M2 5 Q2 3 3.5 3 H7.5 V8 H2Z" fill="#e6e6e6"/><path d="M2 9.3 H8" stroke="#c8d0d8" stroke-width="1"/><path d="M1 9.5 H14.8 V13 Q14.8 14.5 13.3 14.5 H2.5 Q1 14.5 1 13Z" fill="#657075"/><rect x="7" y="0.3" width="8" height="9" rx="1.2" fill="#2a96d2"/><path d="M11.3 2.5 L13.6 4.8 L11.3 7.1Z" fill="#bfe4f8"/><path d="M8.8 4.8 H12" stroke="#8ccbec" stroke-width="1.3"/></svg>
</div>
<div class="a" style="left:368px;top:704px;width:15px;height:190px;background:linear-gradient(90deg,#dedede,#f4f4f4 50%,#e0e0e0);border-left:1px solid #a8a8a8;border-right:1px solid #a8a8a8"></div>
<svg class="a" style="left:371px;top:710px" width="9" height="6"><path d="M0.5 5.5 L4.5 0.8 L8.5 5.5Z" fill="#333"/></svg>
<div class="a" style="left:370px;top:721px;width:12px;height:173px;border-left:1px solid #bbb;border-right:1px solid #bbb;border-radius:6px 6px 0 0;background:linear-gradient(90deg,#e4e4e4,#fafafa,#e4e4e4)"></div>
<div class="a" style="left:370px;top:774px;width:12px;height:78px;border:1px solid #5e6f8c;border-radius:6px;background:linear-gradient(90deg,#8aa0c2,#a8bad6 50%,#8a9ec0)"></div>
<div class="a" style="left:383px;top:704px;width:453px;height:18px;background:#dcdcdc;border-bottom:1px solid #a8a8a8"></div>
<div class="a" style="left:835px;top:704px;width:1px;height:190px;background:#9a9a9a"></div>
<div class="t" style="left:389.4px;top:707.99px;font-size:11px;line-height:11px;color:#111;letter-spacing:0.64px;">Assets</div>
<div class="t" style="left:444px;top:707.99px;font-size:11px;line-height:11px;color:#111;letter-spacing:0.88px;">External</div>
<div class="t" style="left:509px;top:707.99px;font-size:11px;line-height:11px;color:#111;letter-spacing:0.75px;">Materials</div>
<div class="t" style="left:578.5px;top:707.34px;font-size:12px;line-height:12px;font-weight:700;color:#000;letter-spacing:0.87px;">Skybox Materials</div>
<svg class="a" style="left:433.5px;top:709px" width="5" height="8"><path d="M0.5 0.5 L4.5 3.8 L0.5 7.2Z" fill="#777"/></svg>
<svg class="a" style="left:499px;top:709px" width="5" height="8"><path d="M0.5 0.5 L4.5 3.8 L0.5 7.2Z" fill="#777"/></svg>
<svg class="a" style="left:567px;top:709px" width="5" height="8"><path d="M0.5 0.5 L4.5 3.8 L0.5 7.2Z" fill="#777"/></svg>
<svg class="a" style="left:390px;top:728px" width="310" height="70" viewBox="390 728 310 70">
<defs>
<linearGradient id="sk1" x1="0" y1="0" x2="1" y2="0"><stop offset="0" stop-color="#2e3442"/><stop offset="0.7" stop-color="#59647a"/><stop offset="1" stop-color="#a8b4c8"/></linearGradient>
<linearGradient id="sk3" x1="0" y1="0" x2="0" y2="1"><stop offset="0" stop-color="#3a4a78"/><stop offset="1" stop-color="#6878a0"/></linearGradient>
<radialGradient id="sk2" cx="0.4" cy="0.35" r="0.6"><stop offset="0" stop-color="#6a7890"/><stop offset="1" stop-color="#3a4252"/></radialGradient>
<filter id="sh" x="-20%" y="-20%" width="140%" height="140%"><feDropShadow dx="0" dy="1" stdDeviation="0.8" flood-color="#000" flood-opacity="0.45"/></filter>
</defs>
<g filter="url(#sh)">
<rect x="399" y="747.5" width="64" height="32.5" fill="#3a3a3a"/>
<rect x="477" y="734" width="60" height="60" fill="#3a3f48"/>
<rect x="551" y="747.5" width="64" height="32.5" fill="#2a2e48"/>
<rect x="629" y="734" width="60" height="60" fill="#262a38"/>
</g>
<rect x="399" y="747.5" width="64" height="16" fill="url(#sk1)"/>
<path d="M399 764 L404 758 L410 760 L414 756 L420 757 L424 752 Q431 747 436 754 L440 759 L447 758 L452 762 L463 762 V766 H399Z" fill="#2a2a2c"/>
<rect x="399" y="766" width="64" height="14" fill="#3a3a38"/>
<rect x="477" y="734" width="60" height="60" fill="url(#sk2)"/>
<path d="M477 794 V768 L483 760 L490 766 L494 794Z M498 794 L501 772 L510 766 L516 774 L517 794Z" fill="#26282c"/><path d="M519 794 L522 748 L537 738 V794Z" fill="#8c929c"/>
<path d="M523 752 h13 M523 757 h13 M523 762 h13 M523 767 h13 M523 772 h13 M523 777 h13 M523 782 h13" stroke="#50565e" stroke-width="1"/>
<rect x="477" y="784" width="60" height="10" fill="#303236"/>
<rect x="551" y="747.5" width="64" height="16" fill="url(#sk3)"/>
<path d="M551 764 L554 755 L560 757 L566 753 L574 754 L580 756 L588 752 L596 756 L604 754 L615 758 V766 H551Z" fill="#262a3a"/>
<rect x="551" y="766" width="64" height="14" fill="#323654"/>
<path d="M651 734 H689 V746 L668 780 L655 786Z" fill="#6a78a6"/>
<path d="M629 734 H652 L655 790 L629 794Z" fill="#30343e"/>
<path d="M631 740h19M631 745h19M631 750h19M631 755h19M631 760h19M631 765h19M631 770h19M631 775h19" stroke="#5a6272" stroke-width="1.1"/>
<path d="M636 736v50M642 736v52M647 736v52" stroke="#262830" stroke-width="1"/>
<path d="M655 794 L660 776 L689 744 V794Z" fill="#2c3048"/>
<path d="M668 770l18-18M666 778l22-20M670 782l18-16M675 786l13-12" stroke="#4a5578" stroke-width="1"/>
<path d="M662 788 h3 M668 786 h3 M676 789 h3 M682 787 h3 M672 791 h2" stroke="#d05030" stroke-width="1.3"/>
<rect x="443" y="735.7" width="17.4" height="17.3" rx="1.5" fill="#2b9fd8"/><path d="M446.5 744.3 H456 M452 740.3 L456 744.3 L452 748.3" stroke="#fff" stroke-width="1.6" fill="none"/>
<rect x="519" y="735.7" width="17.4" height="17.3" rx="1.5" fill="#2b9fd8"/><path d="M522.5 744.3 H532 M528 740.3 L532 744.3 L528 748.3" stroke="#fff" stroke-width="1.6" fill="none"/>
<rect x="594.5" y="735.7" width="17.4" height="17.3" rx="1.5" fill="#2b9fd8"/><path d="M598 744.3 H607.5 M603.5 740.3 L607.5 744.3 L603.5 748.3" stroke="#fff" stroke-width="1.6" fill="none"/>
<rect x="671" y="735.7" width="17.4" height="17.3" rx="1.5" fill="#2b9fd8"/><path d="M674.5 744.3 H684 M680 740.3 L684 744.3 L680 748.3" stroke="#fff" stroke-width="1.6" fill="none"/>
<g filter="url(#sh)"><circle cx="462.8" cy="763.3" r="7" fill="#5a5a5a" stroke="#9a9a9a" stroke-width="1"/><circle cx="614.5" cy="763.3" r="7" fill="#5a5a5a" stroke="#9a9a9a" stroke-width="1"/></g>
<path d="M460.5 759.8 L466.3 763.3 L460.5 766.8Z" fill="#eee"/><path d="M612.2 759.8 L618 763.3 L612.2 766.8Z" fill="#eee"/>
</svg>
<div class="t" style="left:399.3px;top:799.11px;font-size:10.5px;line-height:10.5px;color:#111;letter-spacing:-0.01px;">Day - Peac…</div>
<div class="t" style="left:473.4px;top:799.11px;font-size:10.5px;line-height:10.5px;color:#111;letter-spacing:-0.05px;">Day Skybox…</div>
<div class="t" style="left:551.3px;top:799.11px;font-size:10.5px;line-height:10.5px;color:#111;letter-spacing:-0.00px;">Dusk - Pea…</div>
<div class="t" style="left:628.3px;top:799.11px;font-size:10.5px;line-height:10.5px;color:#111;letter-spacing:-0.05px;">Dusk Skyb…</div>

<!--/PROJ-->

</body></html>
